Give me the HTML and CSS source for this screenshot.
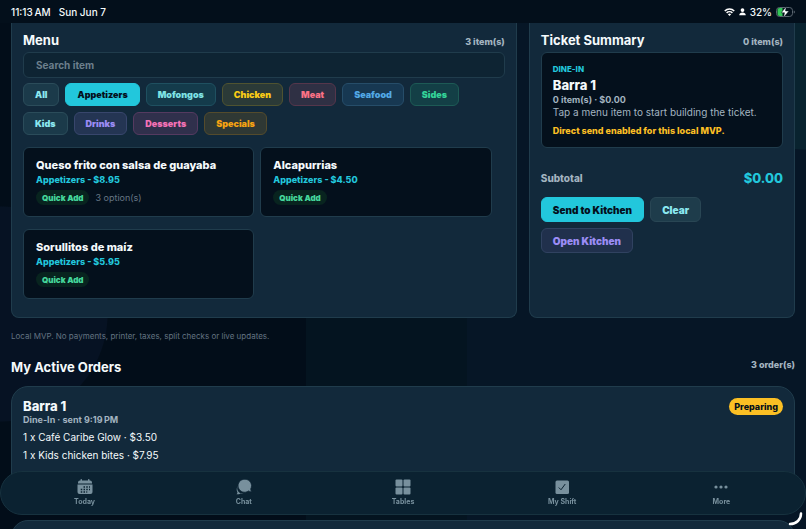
FILE: index.html
```
<!DOCTYPE html>
<html lang="en">
<head>
    <meta charset="UTF-8">
    <meta name="viewport" content="width=device-width, initial-scale=1.0">
    <title>Tables - Barra 1</title>
    <link rel="stylesheet" href="styles.css">
</head>
<body>
    <header class="status-bar">
        <div class="status-left">
            <span>11:13&#8201;AM</span>
            <span>Sun Jun 7</span>
        </div>
        <div class="status-right">
            <svg width="11" height="8" viewBox="0 0 22 16" fill="none" stroke="#fff" stroke-width="3" aria-hidden="true">
                <path d="M1.5 6a13.5 13.5 0 0 1 19 0"/>
                <path d="M5.2 9.8a8.3 8.3 0 0 1 11.6 0"/>
                <path d="M11 15.8l-3.2-3.4a4.8 4.8 0 0 1 6.4 0z" fill="#fff" stroke="none"/>
            </svg>
            <svg width="7" height="8" viewBox="0 0 14 16" fill="#fff" aria-hidden="true">
                <circle cx="7" cy="4.2" r="3.7"/>
                <path d="M0.5 14.5c0-3.6 2.8-5.5 6.5-5.5s6.500 1.900 6.500 5.500z"/>
            </svg>
            <span>32%</span>
            <svg width="19" height="12" viewBox="0 0 38 24" aria-hidden="true">
                <rect x="1" y="3" width="32" height="18" rx="6" fill="none" stroke="#5b6670" stroke-width="2"/>
                <path d="M7 4h6v16H7a4 4 0 0 1-4-4V8a4 4 0 0 1 4-4z" fill="#34c759"/>
                <path d="M35.500 9c3 1 3 5 0 6z" fill="#5b6670"/>
                <path d="M20.500 1l-10 12.500h6.500l-2 9.500 11-13h-7z" fill="#fff" stroke="#030f1b" stroke-width="1"/>
            </svg>
        </div>
    </header>

    <main>
        <div class="columns">
            <section class="panel">
                <div class="panel-head">
                    <h2>Menu</h2>
                    <span class="count">3 item(s)</span>
                </div>
                <input class="search" type="text" placeholder="Search item" aria-label="Search item">
                <div class="chips">
                    <button class="chip">All</button>
                    <button class="chip active">Appetizers</button>
                    <button class="chip teal">Mofongos</button>
                    <button class="chip yellow">Chicken</button>
                    <button class="chip red">Meat</button>
                    <button class="chip blue">Seafood</button>
                    <button class="chip green">Sides</button>
                    <button class="chip">Kids</button>
                    <button class="chip purple">Drinks</button>
                    <button class="chip pink">Desserts</button>
                    <button class="chip orange">Specials</button>
                </div>
                <div class="items">
                    <article class="item">
                        <h3>Queso frito con salsa de guayaba</h3>
                        <p class="price">Appetizers - $8.95</p>
                        <div class="item-foot">
                            <button class="quick-add">Quick Add</button>
                            <span>3 option(s)</span>
                        </div>
                    </article>
                    <article class="item">
                        <h3>Alcapurrias</h3>
                        <p class="price">Appetizers - $4.50</p>
                        <div class="item-foot">
                            <button class="quick-add">Quick Add</button>
                        </div>
                    </article>
                    <article class="item">
                        <h3>Sorullitos de maíz</h3>
                        <p class="price">Appetizers - $5.95</p>
                        <div class="item-foot">
                            <button class="quick-add">Quick Add</button>
                        </div>
                    </article>
                </div>
            </section>

            <section class="panel">
                <div class="panel-head">
                    <h2>Ticket Summary</h2>
                    <span class="count">0 item(s)</span>
                </div>
                <div class="ticket">
                    <p class="ticket-type">DINE-IN</p>
                    <h3>Barra 1</h3>
                    <p class="meta">0 item(s) · $0.00</p>
                    <p class="hint">Tap a menu item to start building the ticket.</p>
                    <p class="notice">Direct send enabled for this local MVP.</p>
                </div>
                <div class="subtotal">
                    <span>Subtotal</span>
                    <strong>$0.00</strong>
                </div>
                <div class="actions">
                    <button class="action active">Send to Kitchen</button>
                    <button class="action">Clear</button>
                    <button class="action purple">Open Kitchen</button>
                </div>
            </section>
        </div>

        <p class="note">Local MVP. No payments, printer, taxes, split checks or live updates.</p>

        <div class="orders-head">
            <h2>My Active Orders</h2>
            <span class="count">3 order(s)</span>
        </div>
        <article class="order">
            <div class="order-head">
                <h3>Barra 1</h3>
                <span class="badge">Preparing</span>
            </div>
            <p class="meta">Dine-In · sent 9:19&#8201;PM</p>
            <p class="line">1 x Café Caribe Glow · $3.50</p>
            <p class="line">1 x Kids chicken bites · $7.95</p>
        </article>
        <article class="order"></article>
    </main>

    <nav class="tab-bar">
        <a href="#">
            <svg width="16" height="16" viewBox="0 0 32 32" aria-hidden="true">
                <path fill="currentColor" d="M2 9V7a4 4 0 0 1 4-4h1V1.500a1.500 1.500 0 0 1 3 0V3h12V1.500a1.500 1.500 0 0 1 3 0V3h1a4 4 0 0 1 4 4v2z"/>
                <path fill="currentColor" d="M1 11h30v15a4 4 0 0 1-4 4H5a4 4 0 0 1-4-4z"/>
                <path stroke="#0b2231" stroke-width="3" stroke-dasharray="3 2.500" d="M13 16h13M7.500 21h18.500M7.500 26h13"/>
            </svg>
            <span>Today</span>
        </a>
        <a href="#">
            <svg width="16" height="16" viewBox="0 0 32 32" fill="currentColor" aria-hidden="true">
                <path d="M4 13a11 11 0 0 0 14 15.500c-3 2-6.500 2-9.500.8-2 1-4.500 1.700-7.500 1.200 1.500-1.500 2-2.500 1.800-4C.5 22.500 1 17 4 13z"/>
                <path stroke="#0b2231" stroke-width="1.500" d="M18 .5a13 13 0 0 1 11.500 19.200c-.2 2.200.5 4 2 5.800-2.500.3-4.500-.3-6.500-1.700A13 13 0 1 1 18 .5z"/>
            </svg>
            <span>Chat</span>
        </a>
        <a href="#">
            <svg width="16" height="16" viewBox="0 0 32 32" fill="currentColor" aria-hidden="true">
                <rect x="1" y="1" width="14" height="14" rx="2"/>
                <rect x="17" y="1" width="14" height="14" rx="2"/>
                <rect x="1" y="17" width="14" height="14" rx="2"/>
                <rect x="17" y="17" width="14" height="14" rx="2"/>
            </svg>
            <span>Tables</span>
        </a>
        <a href="#">
            <svg width="16" height="16" viewBox="0 0 32 32" aria-hidden="true">
                <rect x="3" y="3" width="27" height="27" rx="3" fill="currentColor"/>
                <path fill="none" stroke="#0b2231" stroke-width="2" d="M9.500 17l4.500 4.500 8.500-11.500"/>
            </svg>
            <span>My Shift</span>
        </a>
        <a href="#">
            <svg width="16" height="16" viewBox="0 0 32 32" fill="currentColor" aria-hidden="true">
                <circle cx="6" cy="16" r="3.200"/>
                <circle cx="16" cy="16" r="3.200"/>
                <circle cx="26" cy="16" r="3.200"/>
            </svg>
            <span>More</span>
        </a>
    </nav>

    <svg class="corner" width="16" height="16" viewBox="0 0 16 16" fill="none" aria-hidden="true">
        <path d="M13 2.500c0 6-4.500 10.500-11 10.500" stroke="#fff" stroke-width="2.500" stroke-linecap="round"/>
    </svg>
</body>
</html>
```
FILE: styles.css
```
:root {
    --bg: #020d19;
    --panel: #12293b;
    --card: #04101c;
    --border: #203c4c;
    --cyan: #22c7dc;
    --muted: #a3b4c0;
    --text: #f5fafc;
}

* {
    box-sizing: border-box;
}

body {
    margin: 0;
    height: 100vh;
    overflow: hidden;
    display: flex;
    flex-direction: column;
    font-family: Inter, "Noto Sans", sans-serif;
    font-size: 10px;
    color: var(--text);
    background:
        radial-gradient(circle at 0 314px, #061223 107px, transparent 108px),
        radial-gradient(circle at 100% 40px, #09232f 109px, transparent 110px),
        linear-gradient(to right, var(--bg) 38%, #041420 38%, #041420 58%, #061626 58%);
}

h2, h3, p {
    margin: 0;
}

button {
    font-family: inherit;
    cursor: pointer;
}

/* Status bar */
.status-bar {
    flex: none;
    height: 23px;
    padding: 0 11px;
    display: flex;
    justify-content: space-between;
    align-items: center;
    background-color: #030f1b;
    font-weight: 500;
}

.status-left,
.status-right {
    display: flex;
    align-items: center;
}

.status-left {
    gap: 8px;
}

.status-right {
    gap: 4px;
}

/* Content */
main {
    flex: 1;
    min-height: 0;
    overflow-y: auto;
    scrollbar-width: none;
    padding: 0 11px;
}

.columns {
    display: grid;
    grid-template-columns: 1.9fr 1fr;
    gap: 12px;
}

.panel {
    background-color: var(--panel);
    border: 1px solid var(--border);
    border-top: none;
    border-radius: 0 0 8px 8px;
    padding: 8px 11px 18px;
}

.panel-head,
.orders-head {
    display: flex;
    justify-content: space-between;
}

.panel-head {
    align-items: flex-end;
    height: 18px;
    margin-bottom: 3px;
}

h2 {
    font-size: 13px;
    line-height: 18px;
    font-weight: 700;
}

.count {
    font-size: 9px;
    line-height: 14px;
    font-weight: 800;
    color: var(--muted);
}

.search {
    display: block;
    width: 100%;
    height: 26px;
    padding: 0 12px;
    border: 1px solid var(--border);
    border-radius: 6px;
    background-color: #0e2433;
    color: var(--text);
    font-family: inherit;
    font-size: 10px;
    font-weight: 700;
}

.search::placeholder {
    color: #6c7f8c;
    font-weight: 700;
    opacity: 1;
}

.chips {
    display: flex;
    flex-wrap: wrap;
    gap: 6px;
    margin-top: 5px;
    padding-right: 40px;
}

.chip {
    height: 23px;
    padding: 0 11px;
    border: 1px solid #2b4c5a;
    border-radius: 6px;
    background-color: #1b3a4a;
    color: #8be8f0;
    font-size: 9px;
    font-weight: 900;
}

.teal {
    background-color: #143b4b;
    border-color: #1f5060;
    color: #7fe3e6;
}

.yellow {
    background-color: #2b3a37;
    border-color: #4f5330;
    color: #facc15;
}

.red {
    background-color: #2f3044;
    border-color: #55364b;
    color: #fb7185;
}

.blue {
    background-color: #173852;
    border-color: #264d69;
    color: #52a9e6;
}

.green {
    background-color: #133f46;
    border-color: #1d5a55;
    color: #34d399;
}

.purple {
    background-color: #243553;
    border-color: #38466c;
    color: #9b8cf5;
}

.pink {
    background-color: #30304c;
    border-color: #553a60;
    color: #f472b6;
}

.orange {
    background-color: #2f3834;
    border-color: #544b2c;
    color: #f5a312;
}

.active {
    background-color: var(--cyan);
    border-color: var(--cyan);
    color: #04101c;
}

.items {
    display: flex;
    flex-wrap: wrap;
    gap: 12px 6px;
    margin-top: 12px;
}

.item {
    width: 48%;
    height: 70px;
    padding: 10px 12px;
    background-color: var(--card);
    border: 1px solid var(--border);
    border-radius: 6px;
}

.item h3 {
    font-size: 11px;
    line-height: 15px;
    font-weight: 800;
}

.price {
    font-size: 9px;
    line-height: 14px;
    font-weight: 800;
    color: var(--cyan);
}

.item-foot {
    display: flex;
    align-items: center;
    gap: 6px;
    margin-top: 3px;
    font-size: 9px;
    color: #667684;
}

.quick-add {
    height: 15px;
    padding: 0 6px;
    border: none;
    border-radius: 8px;
    background-color: #08241f;
    color: #45d69b;
    font-size: 8px;
    font-weight: 900;
}

/* Ticket */
.ticket {
    padding: 10px 11px 9px;
    background-color: var(--card);
    border: 1px solid var(--border);
    border-radius: 6px;
}

.ticket-type {
    font-size: 8px;
    line-height: 13px;
    font-weight: 800;
    color: var(--cyan);
}

.ticket h3,
.order h3 {
    font-size: 13px;
    line-height: 18px;
    font-weight: 800;
}

.meta {
    font-size: 9px;
    line-height: 12px;
    font-weight: 700;
    color: var(--muted);
}

.hint {
    font-size: 10px;
    line-height: 13px;
    color: var(--muted);
}

.notice {
    margin-top: 5px;
    font-size: 9px;
    line-height: 14px;
    font-weight: 800;
    color: #fbbf24;
}

.subtotal {
    display: flex;
    justify-content: space-between;
    align-items: center;
    margin-top: 21px;
    line-height: 18px;
    font-weight: 800;
    color: var(--muted);
}

.subtotal strong {
    font-size: 13px;
    font-weight: 800;
    color: var(--cyan);
}

.actions {
    display: flex;
    flex-wrap: wrap;
    gap: 6px;
    margin-top: 10px;
}

.action {
    height: 25px;
    padding: 0 11px;
    border: 1px solid #294654;
    border-radius: 6px;
    background-color: #1e3c4b;
    color: #8be8f0;
    font-size: 10px;
    font-weight: 900;
}

.action.active {
    background-color: var(--cyan);
    border-color: var(--cyan);
    color: #04101c;
}

.action.purple {
    background-color: #20304c;
    border-color: #304260;
    color: #9b8cf5;
}

.note {
    margin-top: 12px;
    font-size: 8px;
    line-height: 12px;
    color: #637381;
}

/* Orders */
.orders-head {
    margin: 16px 0 10px;
}

.order {
    min-height: 123px;
    margin-bottom: 11px;
    padding: 11px;
    background-color: var(--panel);
    border: 1px solid var(--border);
    border-radius: 17px;
}

.order-head {
    display: flex;
    justify-content: space-between;
    height: 16px;
}

.order-head h3 {
    line-height: 16px;
}

.badge {
    height: 17px;
    padding: 0 5px;
    border-radius: 9px;
    background-color: #fbbf24;
    color: #04101c;
    font-size: 9px;
    line-height: 17px;
    font-weight: 800;
}

.line {
    margin-top: 4px;
    font-size: 10px;
    line-height: 14px;
}

/* Bottom tabs */
.tab-bar {
    position: fixed;
    left: 0;
    right: 0;
    bottom: 14px;
    height: 44px;
    display: flex;
    padding: 0 4px;
    background-color: #0b2231;
    border: 1px solid #17323f;
    border-radius: 22px;
}

.tab-bar a {
    flex: 1;
    display: flex;
    flex-direction: column;
    align-items: center;
    justify-content: center;
    gap: 2px;
    color: #78909d;
    font-size: 7px;
    line-height: 10px;
    font-weight: 700;
    text-decoration: none;
}

.corner {
    position: fixed;
    right: 2px;
    bottom: 2px;
}
```
